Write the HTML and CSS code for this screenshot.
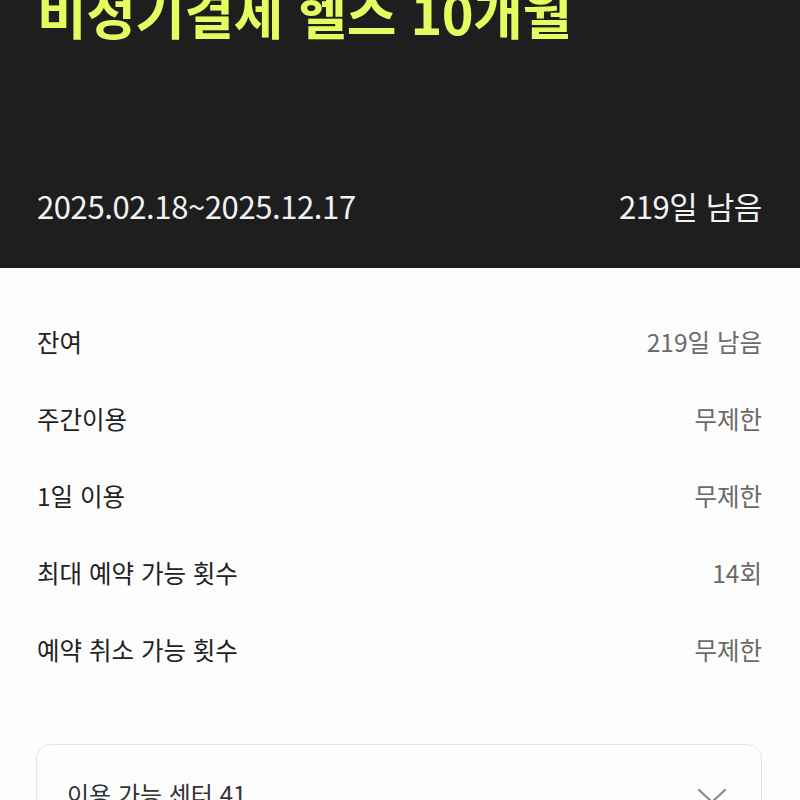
FILE: index.html
```html
<!DOCTYPE html>
<html lang="ko">
<head>
<meta charset="utf-8">
<link rel="stylesheet" href="styles.css">
</head>
<body>
<div class="page">
  <header class="hero">
    <h1 class="title">비정기결제 헬스 10개월</h1>
    <div class="period">
      <span>2025.02.18~2025.12.17</span>
      <span>219일 남음</span>
    </div>
  </header>
  <section class="info">
    <div class="row"><span class="label">잔여</span><span class="value">219일 남음</span></div>
    <div class="row"><span class="label">주간이용</span><span class="value">무제한</span></div>
    <div class="row"><span class="label">1일 이용</span><span class="value">무제한</span></div>
    <div class="row"><span class="label">최대 예약 가능 횟수</span><span class="value">14회</span></div>
    <div class="row"><span class="label">예약 취소 가능 횟수</span><span class="value">무제한</span></div>
  </section>
  <div class="card">
    <span class="card-title">이용 가능 센터 41</span>
    <svg class="chev" width="30" height="18" viewBox="0 0 30 18"><path d="M2 3 L15 15 L28 3" fill="none" stroke="#8a8a8a" stroke-width="2.2" stroke-linecap="round" stroke-linejoin="round"/></svg>
  </div>
</div>
</body>
</html>
```
FILE: styles.css
```css
html, body {
  margin: 0;
  padding: 0;
  background: #fdfdfd;
}
body {
  font-family: "Noto Sans CJK KR", "Noto Sans", sans-serif;
  overflow: hidden;
}
.page {
  width: 800px;
}
.hero {
  background: #1e1e1e;
  height: 268px;
  box-sizing: border-box;
  padding: 0 38px 0 37px;
  display: flex;
  flex-direction: column;
}
.title {
  margin: -18px 0 0 0;
  font-size: 54px;
  line-height: 60px;
  font-weight: 700;
  color: #e5fd5f;
  letter-spacing: -0.5px;
}
.period {
  margin-top: 144px;
  display: flex;
  justify-content: space-between;
  color: #f2f2f2;
  font-size: 31px;
  line-height: 40px;
  letter-spacing: -0.4px;
}
.info {
  padding: 35px 38px 0 37px;
}
.row {
  height: 77px;
  display: flex;
  align-items: center;
  justify-content: space-between;
  font-size: 24.5px;
}
.label {
  color: #222222;
}
.value {
  color: #6a6a6a;
}
.card {
  margin: 56px 38px 0 36px;
  border: 1.5px solid #e4e4e4;
  border-radius: 15px;
  height: 120px;
  box-sizing: border-box;
  padding: 32px 34px 0 30px;
  display: flex;
  justify-content: space-between;
  align-items: flex-start;
}
.card-title {
  font-size: 24px;
  color: #333333;
  line-height: 34px;
}
.chev {
  margin-top: 10px;
}
```
